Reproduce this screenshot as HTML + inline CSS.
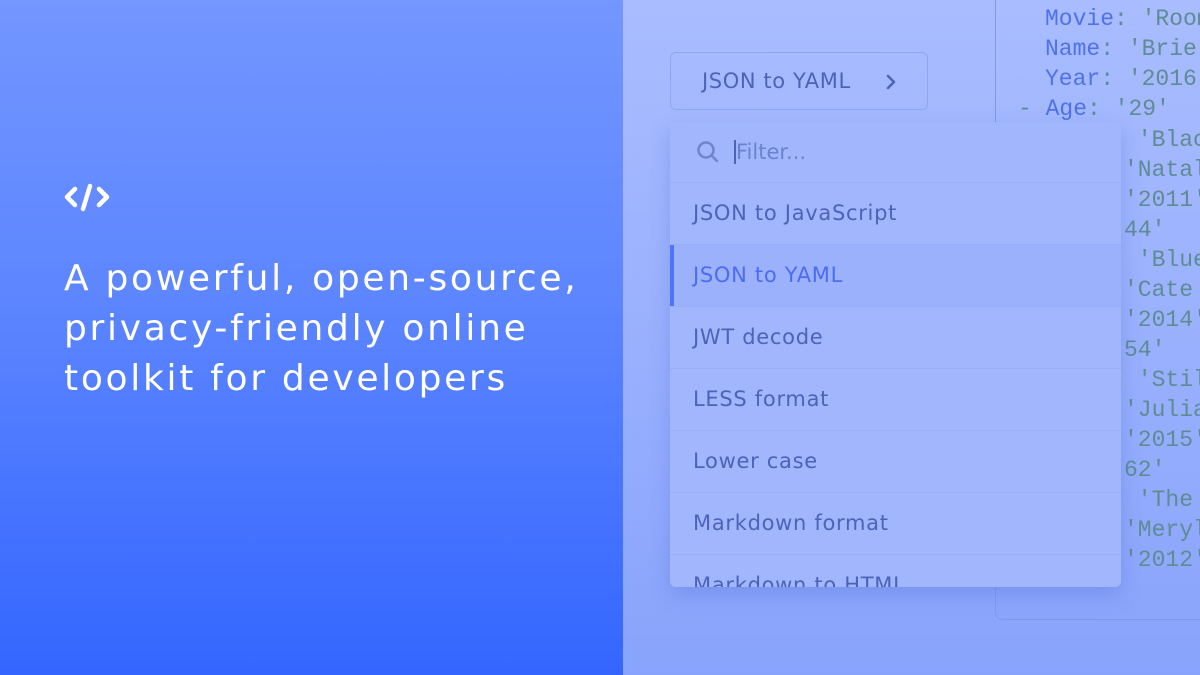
<!DOCTYPE html><html><head><style>
*{margin:0;padding:0;box-sizing:border-box}
body{width:1200px;height:675px;overflow:hidden;position:relative;font-family:"DejaVu Sans","Liberation Sans",sans-serif}
#l{position:absolute;left:0;top:0;width:623px;height:675px;background:linear-gradient(180deg,#7396ff 0%,#5c85ff 45%,#3466ff 100%)}
#r{position:absolute;left:623px;top:0;width:577px;height:675px;background:linear-gradient(180deg,#a9bcff 0%,#96aefd 60%,#88a3fb 100%)}
h1{position:absolute;left:64px;top:254px;color:#fff;font-size:36px;font-weight:normal;line-height:50px;letter-spacing:2.7px}
#code{position:absolute;left:995px;top:-10px;width:230px;height:630px;border:1.5px solid #7f98ee;border-radius:8px}
.cl{position:absolute;font-family:"Liberation Mono",monospace;font-size:23px;color:#5f8c93;white-space:pre}
.k{color:#4f72e6}
#btn{position:absolute;left:670px;top:52px;width:258px;height:58px;border:1.5px solid #8ea7f4;border-radius:6px;color:#4d63b8;font-size:21px;padding:16px 0 0 31px;letter-spacing:0.6px}
#dd{position:absolute;left:670px;top:122px;width:451px;height:465px;background:#a1b6fd;border-radius:6px;box-shadow:0 8px 20px rgba(60,90,200,.25);overflow:hidden}
.it{height:62px;border-top:1.5px solid #98aefa;color:#4d63b8;font-size:21px;padding:18px 0 0 23px;position:relative;letter-spacing:0.7px}
</style></head><body>
<div id="l">
<svg style="position:absolute;left:63px;top:181px" width="48" height="32" viewBox="0 0 48 32"><g stroke="#fff" stroke-width="4.5" fill="none" stroke-linecap="round" stroke-linejoin="round"><path d="M12 8 4 16l8 8M36 8l8 8-8 8"/><path d="M27 5 20 28"/></g></svg>
<h1>A powerful, open-source,<br>privacy-friendly online<br>toolkit for developers</h1>
</div>
<div id="r"></div>
<div id="code"></div>
<div class="cl" style="left:1045px;top:6px"><span class="k">Movie</span>: 'Room'</div>
<div class="cl" style="left:1045px;top:36px"><span class="k">Name</span>: 'Brie </div>
<div class="cl" style="left:1045px;top:66px"><span class="k">Year</span>: '2016'</div>
<div class="cl" style="left:1018px;top:96px">- <span class="k">Age</span>: '29'</div>
<div class="cl" style="left:1124px;top:127px"> 'Black</div>
<div class="cl" style="left:1124px;top:157px">'Natal</div>
<div class="cl" style="left:1124px;top:187px">'2011'</div>
<div class="cl" style="left:1124px;top:217px">44'</div>
<div class="cl" style="left:1124px;top:247px"> 'Blue</div>
<div class="cl" style="left:1124px;top:277px">'Cate</div>
<div class="cl" style="left:1124px;top:307px">'2014'</div>
<div class="cl" style="left:1124px;top:337px">54'</div>
<div class="cl" style="left:1124px;top:367px"> 'Stil</div>
<div class="cl" style="left:1124px;top:397px">'Julia</div>
<div class="cl" style="left:1124px;top:427px">'2015'</div>
<div class="cl" style="left:1124px;top:457px">62'</div>
<div class="cl" style="left:1124px;top:487px"> 'The </div>
<div class="cl" style="left:1124px;top:517px">'Meryl</div>
<div class="cl" style="left:1124px;top:547px">'2012'</div>
<div id="btn">JSON to YAML<svg style="position:absolute;left:214px;top:21px" width="12" height="16" viewBox="0 0 12 16"><path d="M3 2l6 6-6 6" stroke="#4d63b8" stroke-width="2.5" fill="none" stroke-linecap="round" stroke-linejoin="round"/></svg></div>
<div id="dd">
<div style="height:60px;position:relative"><svg style="position:absolute;left:26px;top:18px" width="24" height="24" viewBox="0 0 24 24"><circle cx="10" cy="10" r="7.5" stroke="#6f84cc" stroke-width="2.5" fill="none"/><path d="M16 16l5 5" stroke="#6f84cc" stroke-width="2.5" stroke-linecap="round"/></svg><div style="position:absolute;left:64px;top:18px;width:2px;height:24px;background:#4d63b8"></div><span style="position:absolute;left:66px;top:18px;font-size:21px;color:#6c82cc">Filter...</span></div>
<div class="it">JSON to JavaScript</div>
<div class="it" style="background:#9bb1fc;color:#4c6cf0"><div style="position:absolute;left:0;top:0;width:4px;height:62px;background:#4f74f5"></div>JSON to YAML</div>
<div class="it">JWT decode</div>
<div class="it">LESS format</div>
<div class="it">Lower case</div>
<div class="it">Markdown format</div>
<div class="it">Markdown to HTML</div>
</div>
</body></html>
